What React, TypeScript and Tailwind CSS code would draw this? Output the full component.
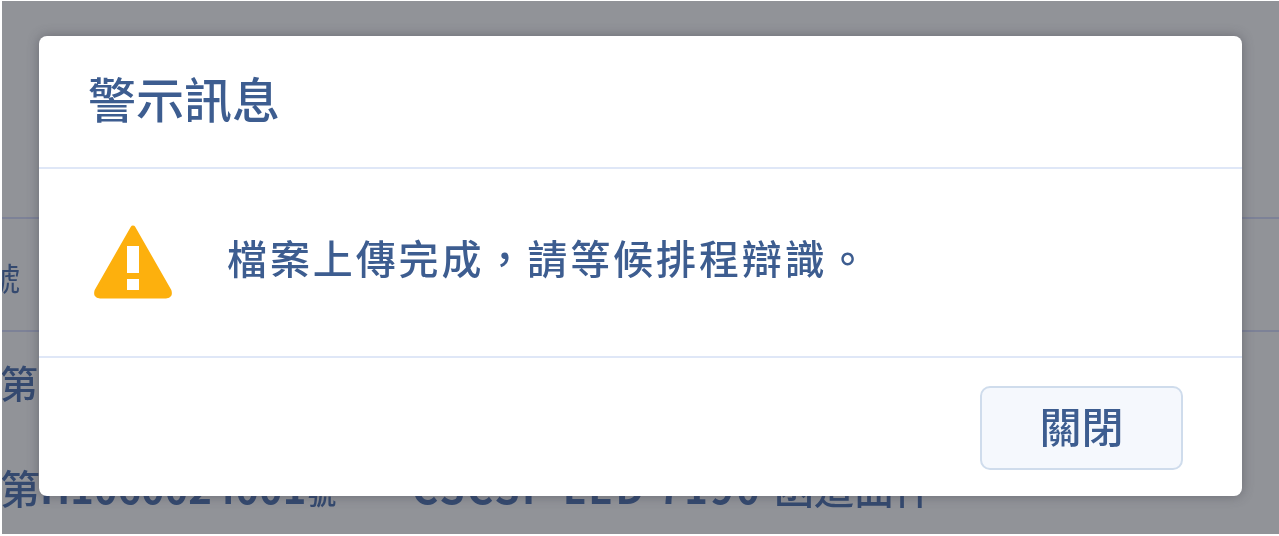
const cjk = { fontFamily: '"Noto Sans CJK TC", "Liberation Sans", sans-serif' };

function WarningIcon() {
  return (
    <svg width="82" height="76" viewBox="0 0 82 76" className="shrink-0 mb-[3px]">
      <path d="M41 5 L77 68 Q78.5 73 74 73 L8 73 Q3.5 73 5 68 Z" fill="#fdb00d" stroke="#fdb00d" strokeWidth="5" strokeLinejoin="round" />
      <rect x="35" y="23" width="12" height="27" fill="#fff" />
      <rect x="35" y="56" width="12" height="11" fill="#fff" />
    </svg>
  );
}

// table behind the overlay, only its edges show
function BackgroundTable() {
  return (
    <div className="absolute inset-x-0 top-[216px] text-[#34496f]">
      <div className="h-[115px] border-y-2 border-[#7d8297] flex items-center overflow-hidden">
        <span className="text-[32px] leading-none -ml-[14px] mt-[4px]">號</span>
      </div>
      <div className="h-[105px] flex items-center overflow-hidden">
        <span className="text-[38px] leading-none font-medium -ml-[2px] mb-[6px]">第</span>
      </div>
      <div className="h-[100px] flex items-center whitespace-nowrap">
        <span className="text-[40px] leading-none font-bold w-[412px] -ml-[2px]">
          <span className="font-medium">第</span>H1060024001<span className="text-[30px] font-medium">號</span>
        </span>
        <span className="text-[40px] leading-none font-bold tracking-[2.5px]">
          CSCSP LED 7190 <span className="font-medium tracking-normal">函道曲件</span>
        </span>
      </div>
    </div>
  );
}

export default function App() {
  return (
    <div lang="zh-TW" style={cjk} className="w-[1279px] h-[536px] bg-white overflow-hidden">
      <div className="relative ml-[2px] mt-px w-[1277px] h-[533px] overflow-hidden bg-[#919398] blur-[0.6px]">
        <BackgroundTable />
        <div className="absolute left-[37px] top-[35px] w-[1203px] h-[460px] rounded-[8px] bg-white flex flex-col shadow-[0_0_12px_rgba(60,60,70,0.45)]">
          <div className="h-[133px] border-b-2 border-[#dfe7f7] pl-[49px] flex items-center">
            <h1 className="text-[48px] font-medium leading-none text-[#3d5d90] mt-[-10px]">警示訊息</h1>
          </div>
          <div className="h-[189px] border-b-2 border-[#dfe7f7] pl-[53px] flex items-center gap-[53px]">
            <WarningIcon />
            <p className="text-[40px] font-medium leading-none tracking-[2.9px] text-[#3d5d90] mb-[12px]">
              {'檔案上傳完成\uFF0C請等候排程辯識。'}
            </p>
          </div>
          <div className="flex-1 flex justify-end items-start pr-[59px] pt-[28px]">
            <button className="w-[203px] h-[84px] rounded-[10px] border-2 border-[#cfdcec] bg-[#f5f8fd] text-[42px] font-medium leading-none text-[#3d5d90] pb-[6px]">
              關閉
            </button>
          </div>
        </div>
      </div>
    </div>
  );
}
